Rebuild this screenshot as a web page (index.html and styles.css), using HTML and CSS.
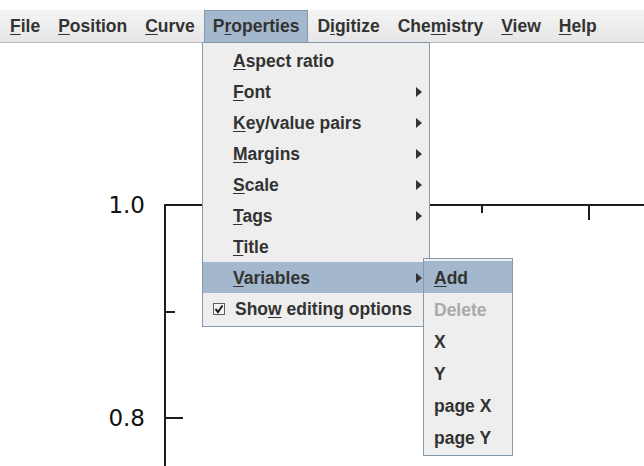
FILE: index.html
```html
<!DOCTYPE html>
<html lang="en">
<head>
    <meta charset="UTF-8">
    <meta name="viewport" content="width=device-width, initial-scale=1.0">
    <title>Plot</title>
    <link rel="stylesheet" href="styles.css">
</head>
<body>
    <div class="menubar">
        <div class="menu"><u>F</u>ile</div>
        <div class="menu"><u>P</u>osition</div>
        <div class="menu"><u>C</u>urve</div>
        <div class="menu open">P<u>r</u>operties</div>
        <div class="menu">D<u>i</u>gitize</div>
        <div class="menu">Che<u>m</u>istry</div>
        <div class="menu"><u>V</u>iew</div>
        <div class="menu"><u>H</u>elp</div>
    </div>

    <svg class="plot" width="644" height="423" viewBox="0 0 644 423">
        <g stroke="#1e1e1e" stroke-width="2" fill="none">
            <polyline points="165,423 165,162 644,162"/>
            <line x1="482" y1="162" x2="482" y2="170"/>
            <line x1="589" y1="162" x2="589" y2="177"/>
            <line x1="165" y1="269" x2="175" y2="269"/>
            <line x1="165" y1="375" x2="183" y2="375"/>
        </g>
        <text class="tick-label" x="145" y="170" text-anchor="end">1.0</text>
        <text class="tick-label" x="145" y="383" text-anchor="end">0.8</text>
    </svg>

    <!-- Properties dropdown -->
    <div class="dropdown props">
        <div class="item"><u>A</u>spect ratio</div>
        <div class="item sub"><u>F</u>ont</div>
        <div class="item sub"><u>K</u>ey/value pairs</div>
        <div class="item sub"><u>M</u>argins</div>
        <div class="item sub"><u>S</u>cale</div>
        <div class="item sub"><u>T</u>ags</div>
        <div class="item"><u>T</u>itle</div>
        <div class="item sub active"><u>V</u>ariables</div>
        <div class="item check">
            <svg class="checkbox" width="12" height="12" viewBox="0 0 12 12">
                <rect x="0.5" y="0.5" width="11" height="11" fill="#f2f2f2" stroke="#5f5f5f"/>
                <path d="M2.5 6 L5 9 L9.5 2.5" stroke="#1e1e1e" stroke-width="2" fill="none"/>
            </svg>
            <span>Sho<u>w</u> editing options</span>
        </div>
    </div>

    <!-- Variables submenu -->
    <div class="dropdown vars">
        <div class="item active"><u>A</u>dd</div>
        <div class="item disabled">Delete</div>
        <div class="item">X</div>
        <div class="item">Y</div>
        <div class="item">page X</div>
        <div class="item">page Y</div>
    </div>
</body>
</html>
```

FILE: styles.css
```css
/* Page */
body {
    margin: 0;
    background: #ffffff;
    font-family: "Liberation Sans", Arial, sans-serif;
    font-weight: bold;
    font-size: 17.5px;
    color: #333333;
    position: relative;
    width: 644px;
    height: 466px;
    overflow: hidden;
}

u {
    text-decoration-thickness: 1px;
    text-underline-offset: 2px;
}

/* Menu bar */
.menubar {
    margin-top: 10px;
    height: 32px;
    display: flex;
    padding-left: 1px;
    background: linear-gradient(#f4f4f4, #e6e6e6);
    border-bottom: 1px solid #b9b9b9;
}

.menu {
    padding: 0 9px;
    line-height: 32px;
    box-sizing: border-box;
}

.menu.open {
    background: #a3b8cc;
    border: 1px solid #8599ad;
    border-bottom: none;
    line-height: 31px;
    padding: 0 8px;
}

/* Plot */
.plot {
    display: block;
}

.tick-label {
    font-family: "DejaVu Sans", sans-serif;
    font-weight: normal;
    font-size: 23px;
    fill: #111111;
}

/* Dropdown menus */
.dropdown {
    position: absolute;
    background: #eeeeee;
    border: 1px solid #8698ab;
    box-sizing: border-box;
}

.props {
    left: 202px;
    top: 42px;
    width: 228px;
    padding: 2px 0;
}

.props .item {
    height: 31px;
    line-height: 32px;
    padding-left: 30px;
    position: relative;
}

.item.sub::after {
    content: "";
    position: absolute;
    right: 7px;
    top: 11px;
    border-left: 6px solid #333333;
    border-top: 5px solid transparent;
    border-bottom: 5px solid transparent;
}

.item.active {
    background: #a3b8cc;
}

.props .item.check {
    padding-left: 10px;
    display: flex;
    align-items: center;
    gap: 10px;
}

.vars {
    left: 423px;
    top: 258px;
    width: 90px;
    padding: 2px 0;
}

.vars .item {
    height: 32px;
    line-height: 34px;
    padding-left: 10px;
}

.item.disabled {
    color: #a9a9a9;
}
```
